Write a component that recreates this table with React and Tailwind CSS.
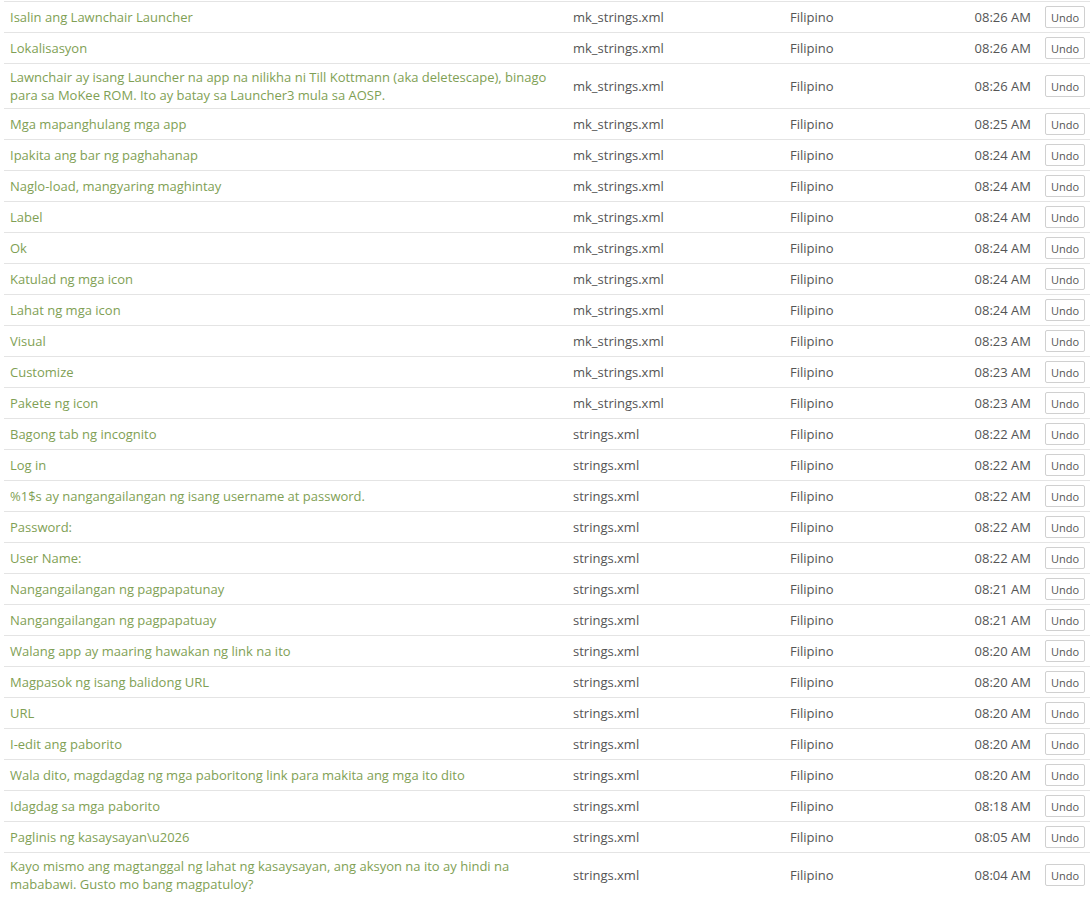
const rows = [
  ['Isalin ang Lawnchair Launcher', 'mk_strings.xml', '08:26 AM'],
  ['Lokalisasyon', 'mk_strings.xml', '08:26 AM'],
  ['Lawnchair ay isang Launcher na app na nilikha ni Till Kottmann (aka deletescape), binago para sa MoKee ROM. Ito ay batay sa Launcher3 mula sa AOSP.', 'mk_strings.xml', '08:26 AM'],
  ['Mga mapanghulang mga app', 'mk_strings.xml', '08:25 AM'],
  ['Ipakita ang bar ng paghahanap', 'mk_strings.xml', '08:24 AM'],
  ['Naglo-load, mangyaring maghintay', 'mk_strings.xml', '08:24 AM'],
  ['Label', 'mk_strings.xml', '08:24 AM'],
  ['Ok', 'mk_strings.xml', '08:24 AM'],
  ['Katulad ng mga icon', 'mk_strings.xml', '08:24 AM'],
  ['Lahat ng mga icon', 'mk_strings.xml', '08:24 AM'],
  ['Visual', 'mk_strings.xml', '08:23 AM'],
  ['Customize', 'mk_strings.xml', '08:23 AM'],
  ['Pakete ng icon', 'mk_strings.xml', '08:23 AM'],
  ['Bagong tab ng incognito', 'strings.xml', '08:22 AM'],
  ['Log in', 'strings.xml', '08:22 AM'],
  ['%1$s ay nangangailangan ng isang username at password.', 'strings.xml', '08:22 AM'],
  ['Password:', 'strings.xml', '08:22 AM'],
  ['User Name:', 'strings.xml', '08:22 AM'],
  ['Nangangailangan ng pagpapatunay', 'strings.xml', '08:21 AM'],
  ['Nangangailangan ng pagpapatuay', 'strings.xml', '08:21 AM'],
  ['Walang app ay maaring hawakan ng link na ito', 'strings.xml', '08:20 AM'],
  ['Magpasok ng isang balidong URL', 'strings.xml', '08:20 AM'],
  ['URL', 'strings.xml', '08:20 AM'],
  ['I-edit ang paborito', 'strings.xml', '08:20 AM'],
  ['Wala dito, magdagdag ng mga paboritong link para makita ang mga ito dito', 'strings.xml', '08:20 AM'],
  ['Idagdag sa mga paborito', 'strings.xml', '08:18 AM'],
  ['Paglinis ng kasaysayan\\u2026', 'strings.xml', '08:05 AM'],
  ['Kayo mismo ang magtanggal ng lahat ng kasaysayan, ang aksyon na ito ay hindi na mababawi. Gusto mo bang magpatuloy?', 'strings.xml', '08:04 AM'],
];

export default function App() {
  return (
    <div className="bg-white min-h-screen pl-1 pt-px" style={{ fontFamily: '"Open Sans", sans-serif' }}>
      <table className="w-full border-collapse text-[13px] leading-[18px] table-fixed">
        <colgroup>
          <col className="w-[563px]" />
          <col className="w-[217px]" />
          <col className="w-[150px]" />
          <col />
          <col className="w-[51px]" />
        </colgroup>
        <tbody>
          {rows.map(([text, file, time], i) => (
            <tr key={i} className="border-t border-[#e4e4e4]">
              <td className="px-1.5 py-1 text-[#7f9f55] align-middle">{text}</td>
              <td className="px-1.5 py-1 text-[#555] align-middle">{file}</td>
              <td className="px-1.5 py-1 text-[#555] align-middle">Filipino</td>
              <td className="pl-1.5 pr-2 py-1 text-[#555] text-right align-middle">{time}</td>
              <td className="pl-1.5 py-1 align-middle">
                <button className="h-[22px] w-[40px] border border-[#d0d0d0] rounded-[2px] bg-white text-[11px] text-[#555] leading-none">
                  Undo
                </button>
              </td>
            </tr>
          ))}
        </tbody>
      </table>
    </div>
  );
}
